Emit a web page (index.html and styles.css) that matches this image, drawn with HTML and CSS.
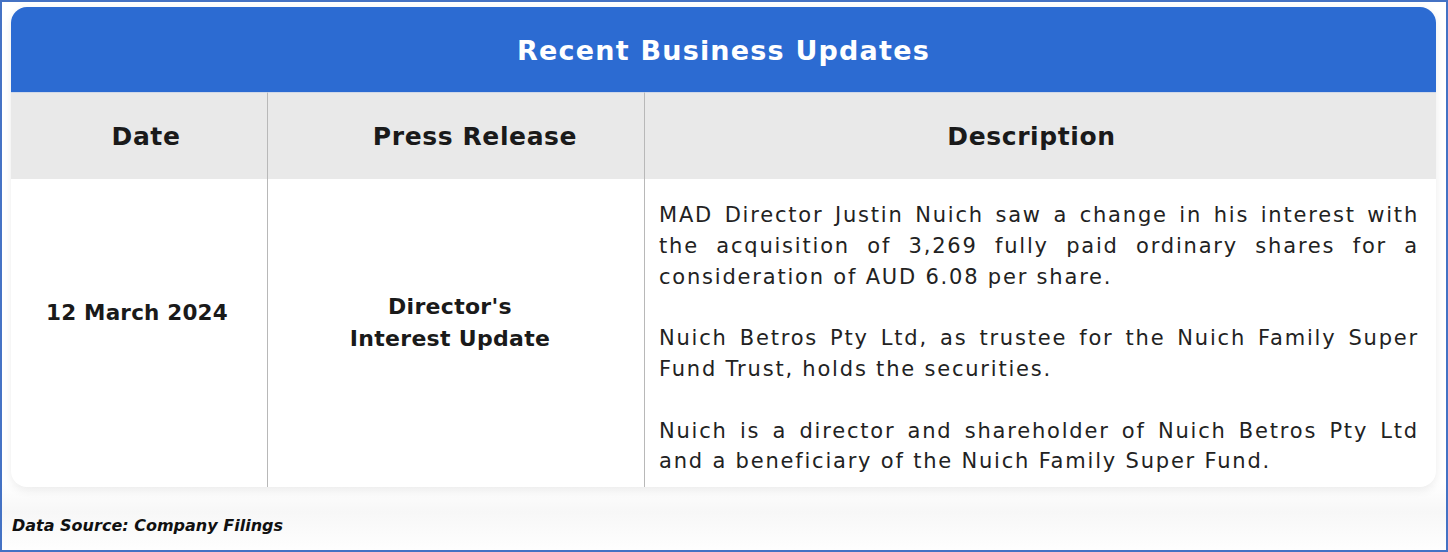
FILE: index.html
```html
<!DOCTYPE html>
<html lang="en">
<head>
<meta charset="utf-8">
<title>Recent Business Updates</title>
<link rel="stylesheet" href="styles.css">
</head>
<body>
<div class="frame">
  <div class="card">
    <div class="title">Recent Business Updates</div>
    <div class="grid">
      <div class="head head-date">Date</div>
      <div class="head head-press">Press Release</div>
      <div class="head head-desc">Description</div>
      <div class="cell cell-date">12 March 2024</div>
      <div class="cell cell-press">Director's<br>Interest Update</div>
      <div class="cell cell-desc">
        <p>MAD Director Justin Nuich saw a change in his interest with the acquisition of 3,269 fully paid ordinary shares for a consideration of AUD 6.08 per share.</p>
        <p>Nuich Betros Pty Ltd, as trustee for the Nuich Family Super Fund Trust, holds the securities.</p>
        <p>Nuich is a director and shareholder of Nuich Betros Pty Ltd and a beneficiary of the Nuich Family Super Fund.</p>
      </div>
    </div>
  </div>
  <div class="source">Data Source: Company Filings</div>
</div>
</body>
</html>
```
FILE: styles.css
```css
html, body {
  margin: 0;
  padding: 0;
  background: #ffffff;
}
.frame {
  box-sizing: border-box;
  width: 1448px;
  height: 552px;
  border: 2px solid #4472c4;
  padding: 5px 10px 0 9px;
  background: linear-gradient(#ffffff 0, #ffffff 480px, #f7f7f7 510px, #ffffff 552px);
  font-family: "DejaVu Sans", sans-serif;
  color: #1a1a1a;
}
.card {
  background: #ffffff;
  border-radius: 16px;
  overflow: hidden;
  box-shadow: 0 3px 10px rgba(0, 0, 0, 0.08);
}
.title {
  height: 85px;
  background: #2c6bd2;
  color: #ffffff;
  font-weight: bold;
  font-size: 27px;
  letter-spacing: 1.2px;
  display: flex;
  align-items: center;
  justify-content: center;
  padding-top: 2px;
  box-sizing: border-box;
}
.grid {
  display: grid;
  grid-template-columns: 257px 377px 1fr;
  grid-template-rows: 87px 308px;
}
.head {
  background: #e9e9e9;
  font-weight: bold;
  font-size: 25px;
  letter-spacing: 0.6px;
  display: flex;
  align-items: center;
  justify-content: center;
  border-top: 1px solid #d0d8e8;
}
.head-date { padding-left: 14px; border-right: 1px solid #b8b8b8; }
.head-press { padding-left: 38px; border-right: 1px solid #b8b8b8; }
.head-desc { padding-right: 18px; }
.cell-date, .cell-press {
  font-weight: bold;
  font-size: 22px;
  letter-spacing: 0.3px;
  display: flex;
  align-items: center;
  justify-content: center;
  text-align: center;
  line-height: 32px;
  border-right: 1px solid #b8b8b8;
}
.cell-date { padding-right: 4px; padding-bottom: 40px; font-size: 21.5px; letter-spacing: 0.2px; }
.cell-press { padding-right: 12px; padding-bottom: 21px; }
.cell-desc {
  padding: 21px 17px 0 14px;
  font-size: 21px;
  letter-spacing: 1.8px;
  line-height: 30.8px;
  text-align: justify;
  color: #222222;
}
.cell-desc p {
  margin: 0 0 30.8px 0;
}
.cell-desc p:last-child {
  margin-bottom: 0;
}
.source {
  margin-top: 29px;
  padding-left: 1px;
  font-size: 16px;
  font-weight: bold;
  font-style: italic;
  color: #111111;
}
```
